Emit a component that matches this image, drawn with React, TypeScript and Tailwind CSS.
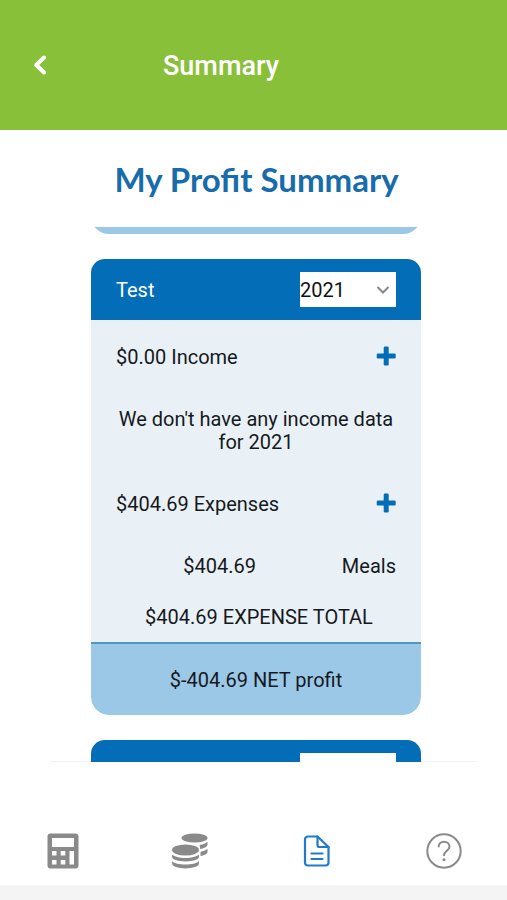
import { useState } from 'react';

type Expense = { label: string; amount: string };

const expenses: Expense[] = [{ label: 'Meals', amount: '$404.69' }];

function BackIcon() {
  return (
    <svg className="h-5 w-4" viewBox="0 0 16 20" fill="none" stroke="currentColor" strokeWidth="4" strokeLinecap="round" strokeLinejoin="round">
      <path d="M12 2.500 4.300 10 12 17.500" />
    </svg>
  );
}

function PlusIcon() {
  return (
    <svg className="h-5 w-5" viewBox="0 0 20 20" fill="currentColor">
      <rect x="7.700" y="0.500" width="5" height="19" rx="1.200" />
      <rect x="0.700" y="7.500" width="19" height="5" rx="1.200" />
    </svg>
  );
}

function CalculatorIcon() {
  return (
    <svg className="h-9 w-8" viewBox="0 0 32 36">
      <path
        fill="currentColor"
        fillRule="evenodd"
        d="M3.500.500h25a3 3 0 0 1 3 3v29a3 3 0 0 1-3 3h-25a3 3 0 0 1-3-3v-29a3 3 0 0 1 3-3ZM5 5v9h22V5ZM5 18v4.500h4.500V18ZM13.700 18v4.500h4.600V18ZM22.500 18v13.500H27V18ZM5 27v4.500h4.500V27ZM13.700 27v4.500h4.600V27Z"
      />
    </svg>
  );
}

function CoinsIcon() {
  return (
    <svg className="h-9 w-[38px]" viewBox="0 0 38 36" fill="currentColor">
      <ellipse cx="23.500" cy="5" rx="13" ry="4.500" />
      <path d="M28.500 12c3.600-.5 6.300-1.600 8-3.200v2.700c0 2-2.800 3.700-7.500 4.500.2-1.500.1-2.800-.5-4Z" />
      <path d="M29.500 18.800c3.200-.6 5.600-1.700 7-3.100v3c0 1.900-2.600 3.500-7 4.300Z" />
      <ellipse cx="14.500" cy="17" rx="13.500" ry="5.500" />
      <path d="M1 21.500c2.500 2.300 7.500 3.500 13.500 3.500S25.500 23.800 28 21.500v2.300c0 2.700-6 4.700-13.500 4.700S1 26.500 1 23.800Z" />
      <path d="M1 28.300c2.500 2.300 7.500 3.300 13.500 3.300s11-1 13.500-3.300v2.300c0 2.700-6 4.900-13.500 4.900S1 33.300 1 30.600Z" />
    </svg>
  );
}

function DocumentIcon() {
  return (
    <svg className="h-8 w-7" viewBox="0 0 28 32" fill="none" stroke="currentColor" strokeWidth="2.200" strokeLinecap="round" strokeLinejoin="round">
      <path d="M5 1.500h9.500L25.500 12v15.500a3 3 0 0 1-3 3H5a3 3 0 0 1-3-3v-23a3 3 0 0 1 3-3Z" />
      <path d="M14.500 1.500V10a2 2 0 0 0 2 2h9" />
      <path d="M8.500 18.500h11M8.500 24h11" />
    </svg>
  );
}

function HelpIcon() {
  return (
    <svg className="h-9 w-9" viewBox="0 0 36 36" fill="none" stroke="currentColor" strokeWidth="2" strokeLinecap="round" strokeLinejoin="round">
      <circle cx="18" cy="18" r="16.700" />
      <path d="M12.700 13.500C12.700 10.500 15 8.700 18 8.700s5.500 2 5.500 4.800c0 4.200-5.500 4.300-5.500 8.800" />
      <circle cx="18" cy="26.800" r="1.500" fill="currentColor" stroke="none" />
    </svg>
  );
}

function CardHeader({ id, name }: { id: string; name: string }) {
  const [year, setYear] = useState('2021');

  return (
    <div className="flex items-center justify-between bg-[#046db7] px-[25px] py-[13px]">
      <label htmlFor={id} className="pt-px text-white">
        {name}
      </label>
      <div className="relative">
        <select
          id={id}
          aria-label={name ? undefined : 'Year'}
          value={year}
          onChange={(e) => setYear(e.target.value)}
          className="block h-[35px] w-24 appearance-none rounded-none bg-white pt-px text-[#111]"
        >
          <option>2021</option>
          <option>2020</option>
        </select>
        <svg
          className="pointer-events-none absolute top-3 right-1.5 h-3 w-3.5 text-[#888]"
          viewBox="0 0 14 12"
          fill="none"
          stroke="currentColor"
          strokeWidth="2"
        >
          <path d="m1.500 3 5.500 5.500L12.500 3" />
        </svg>
      </div>
    </div>
  );
}

function SectionTitle({ text, action }: { text: string; action: string }) {
  return (
    <div className="flex items-start justify-between">
      <h2>{text}</h2>
      <button type="button" aria-label={action} className="text-[#046db7]">
        <PlusIcon />
      </button>
    </div>
  );
}

function NetProfit({ text }: { text: string }) {
  return (
    <p className="shrink-0 rounded-b-[18px] border-t-2 border-[#4f97cb] bg-[#9cc8e8] pt-[25px] pb-[23px] text-center">
      {text}
    </p>
  );
}

function SummaryCard() {
  return (
    <section className="shrink-0 overflow-hidden rounded-t-[14px] rounded-b-[18px]">
      <CardHeader id="year-test" name="Test" />
      <div className="bg-[#e9f1f7] px-[25px] pt-[26px] pb-[13px]">
        <SectionTitle text="$0.00 Income" action="Add income" />
        <p className="my-[39px] text-center">We don't have any income data for 2021</p>
        <SectionTitle text="$404.69 Expenses" action="Add expense" />
        <table className="mt-[39px] w-full table-fixed text-right">
          <tbody>
            {expenses.map((e) => (
              <tr key={e.label}>
                <td className="p-0">{e.amount}</td>
                <td className="p-0">{e.label}</td>
              </tr>
            ))}
          </tbody>
        </table>
        <p className="mt-7 pl-1.5 text-center">$404.69 EXPENSE TOTAL</p>
      </div>
      <NetProfit text="$-404.69 NET profit" />
    </section>
  );
}

export default function App() {
  return (
    <div className="flex h-screen flex-col bg-white font-['Roboto',sans-serif] text-[20px] leading-[23px] text-[#15191c]">
      <header className="flex h-[130px] shrink-0 items-center gap-[115px] bg-[#89c03a] pl-8 text-white">
        <button type="button" aria-label="Back">
          <BackIcon />
        </button>
        <span className="pt-0.5 text-[27px] leading-8 font-medium">Summary</span>
      </header>

      <h1 className="shrink-0 pt-[27px] pb-[26px] pl-1.5 text-center font-['Lato',sans-serif] text-[33px] leading-[44px] font-bold text-[#176cab]">
        My Profit Summary
      </h1>

      <main className="relative z-10 flex min-h-0 flex-1 flex-col gap-[25px] overflow-hidden pr-[86px] pl-[91px]">
        <div className="flex h-[7px] shrink-0 flex-col justify-end overflow-hidden">
          <NetProfit text="" />
        </div>
        <SummaryCard />
        <section className="shrink-0 overflow-hidden rounded-t-[14px]">
          <CardHeader id="year-next" name="" />
        </section>
      </main>
      <div className="mr-[30px] ml-[50px] -mt-px h-px shrink-0 bg-[#f2f2f2]" />

      <nav className="grid h-[123px] shrink-0 grid-cols-4 items-end justify-items-center pb-4 text-[#8a8a8a]">
        <a href="#calculator" aria-label="Calculator">
          <CalculatorIcon />
        </a>
        <a href="#income" aria-label="Income">
          <CoinsIcon />
        </a>
        <a href="#summary" aria-label="Summary" className="pb-0.5 text-[#1f7bcb]">
          <DocumentIcon />
        </a>
        <a href="#help" aria-label="Help">
          <HelpIcon />
        </a>
      </nav>
      <div className="h-[15px] shrink-0 bg-[#f4f4f4]" />
    </div>
  );
}
